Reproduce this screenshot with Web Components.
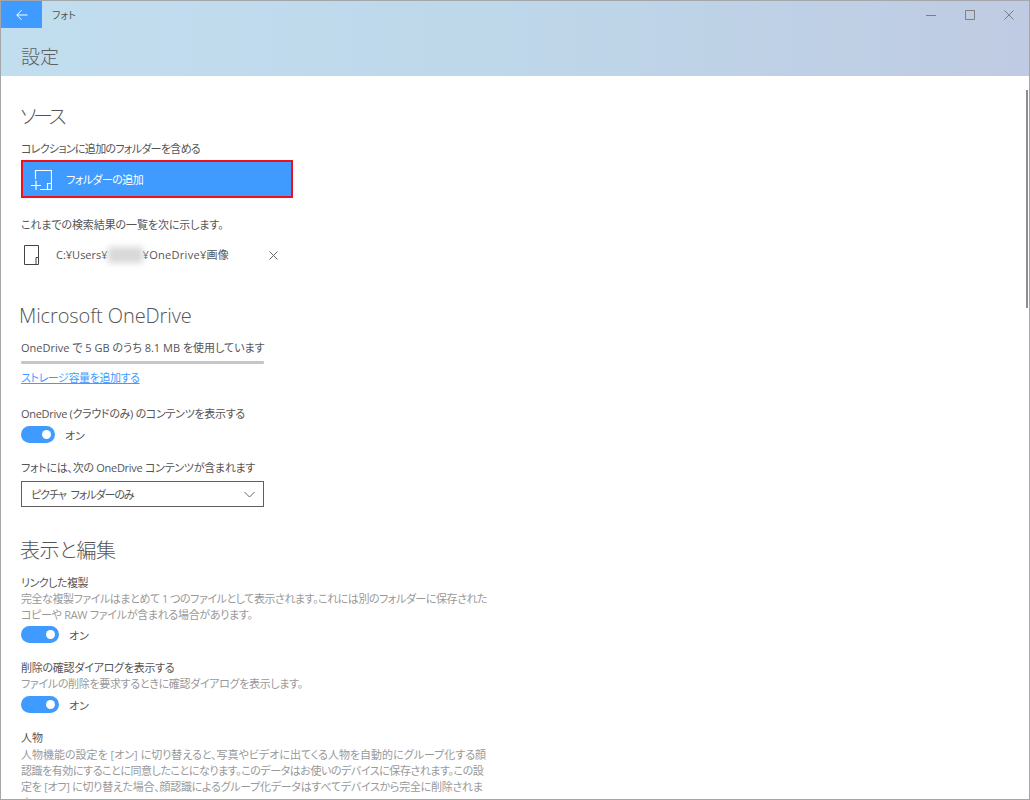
<!DOCTYPE html>
<html lang="ja">
<head>
<meta charset="utf-8">
<title>フォト</title>
<style>
    html, body { margin: 0; height: 100%; overflow: hidden; background: #fff; }
    body { font: 11px/16px "Open Sans", "Noto Sans CJK JP", sans-serif; color: #555; }
</style>
</head>
<body>
<photo-window>
    <title-bar slot="top" app="フォト" page="設定"></title-bar>

    <section-heading style="margin-top:26px;letter-spacing:-3.4px">ソース</section-heading>
    <field-label style="margin-top:10px;letter-spacing:-.7px">コレクションに追加のフォルダーを含める</field-label>
    <add-folder-button style="margin-top:4px;letter-spacing:-.55px">フォルダーの追加</add-folder-button>
    <field-label style="margin-top:18px;letter-spacing:-.1px">これまでの検索結果の一覧を次に示します。</field-label>
    <folder-row style="margin-top:12px"></folder-row>

    <section-heading style="margin-top:35px;margin-left:-2px;letter-spacing:-.1px">Microsoft OneDrive</section-heading>
    <field-label style="margin-top:10px">OneDrive で 5 GB のうち 8.1 MB を使用しています</field-label>
    <storage-meter style="margin-top:6px"></storage-meter>
    <link-text style="margin-top:5px;letter-spacing:-.4px">ストレージ容量を追加する</link-text>
    <field-label style="margin-top:20px;letter-spacing:-.3px">OneDrive (クラウドのみ) のコンテンツを表示する</field-label>
    <toggle-switch style="margin-top:5px" track="34">オン</toggle-switch>
    <field-label style="margin-top:16px;letter-spacing:-.28px">フォトには、次の OneDrive コンテンツが含まれます</field-label>
    <drop-down style="margin-top:6px;letter-spacing:-1.05px;word-spacing:3px">ピクチャ フォルダーのみ</drop-down>

    <section-heading style="margin-top:29px;letter-spacing:-.4px">表示と編集</section-heading>
    <field-label style="margin-top:10px;letter-spacing:-.5px">リンクした複製</field-label>
    <help-text style="letter-spacing:-.45px">完全な複製ファイルはまとめて 1 つのファイルとして表示されます。これには別のフォルダーに保存された<br><span style="letter-spacing:-.3px">コピーや RAW ファイルが含まれる場合があります。</span></help-text>
    <toggle-switch style="margin-top:4px" track="38">オン</toggle-switch>
    <field-label style="margin-top:16px;letter-spacing:-.25px">削除の確認ダイアログを表示する</field-label>
    <help-text style="letter-spacing:-.32px">ファイルの削除を要求するときに確認ダイアログを表示します。</help-text>
    <toggle-switch style="margin-top:5px" track="38">オン</toggle-switch>
    <field-label style="margin-top:16px">人物</field-label>
    <help-text style="margin-top:1px;letter-spacing:-.45px"><span style="letter-spacing:0">人物機能の設定を [オン] に切り替えると、写真やビデオに出てくる人物を自動的にグループ化する顔</span><br>認識を有効にすることに同意したことになります。このデータはお使いのデバイスに保存されます。この設<br><span style="letter-spacing:-.27px">定を [オフ] に切り替えた場合、顔認識によるグループ化データはすべてデバイスから完全に削除されま</span><br>す。</help-text>
</photo-window>

<script>
// text sits 1px lower in its line box than the browser puts it
const textStyle = `
    :host { display: block; font-feature-settings: "palt"; padding-top: 1px; margin-bottom: -1px; }
`;

class PhotoWindow extends HTMLElement {
    constructor() {
        super();
        this.attachShadow({mode: 'open'}).innerHTML = `
            <style>
                :host { display: flex; flex-direction: column; position: relative; box-sizing: border-box; width: 1030px; height: 800px; border: 1px solid #a3a7ab; overflow: hidden; background: #fff; }
                main { flex: 1; display: flex; flex-direction: column; align-items: flex-start; padding-left: 20px; overflow: hidden; min-height: 0; }
                ::slotted(*) { flex: none; }
                .thumb { position: absolute; right: 1px; top: 89px; width: 2px; height: 218px; background: #8e8e8e; }
            </style>
            <slot name="top"></slot>
            <main><slot></slot></main>
            <div class="thumb"></div>
        `;
    }
}

class TitleBar extends HTMLElement {
    constructor() {
        super();
        this.attachShadow({mode: 'open'}).innerHTML = `
            <style>
                :host { display: block; height: 75px; flex: none; background: linear-gradient(90deg, #c1deef 0%, #bed8ea 45%, #bfcbe2 100%); font-feature-settings: "palt"; }
                .top { display: flex; align-items: center; height: 27px; }
                .back { width: 41px; height: 27px; background: #3f9bff; display: flex; align-items: center; justify-content: center; }
                .app { margin-left: 10px; font-size: 10px; color: #555; flex: 1; }
                .ctl { width: 39px; height: 27px; display: flex; align-items: center; justify-content: center; }
                .ctl:last-child { width: 40px; }
                .page { padding: 15px 0 0 20px; font-size: 19px; line-height: 28px; color: #5b5f63; font-weight: 300; }
                svg { display: block; fill: none; }
            </style>
            <div class="top">
                <div class="back"><svg width="12" height="12" viewBox="0 0 12 12" stroke="#fff" stroke-width="1"><path d="M11.5 6H.8M5.5 1.2.8 6l4.7 4.8"/></svg></div>
                <div class="app"></div>
                <div class="ctl"><svg width="10" height="10" viewBox="0 0 10 10" stroke="#7f7f7f"><path d="M0 5.5h10"/></svg></div>
                <div class="ctl"><svg width="10" height="10" viewBox="0 0 10 10" stroke="#7f7f7f"><path d="M.5.5h9v9h-9z"/></svg></div>
                <div class="ctl"><svg width="10" height="10" viewBox="0 0 10 10" stroke="#7f7f7f"><path d="M.5.5l9 9M9.5.5l-9 9"/></svg></div>
            </div>
            <div class="page"></div>
        `;
        this.shadowRoot.querySelector('.app').textContent = this.getAttribute('app');
        this.shadowRoot.querySelector('.page').textContent = this.getAttribute('page');
    }
}

class SectionHeading extends HTMLElement {
    constructor() {
        super();
        this.attachShadow({mode: 'open'}).innerHTML = `
            <style>${textStyle}
                :host { font-size: 20px; line-height: 28px; color: #555; font-weight: 300; margin-left: -1px; }
            </style>
            <slot></slot>
        `;
    }
}

class FieldLabel extends HTMLElement {
    constructor() {
        super();
        this.attachShadow({mode: 'open'}).innerHTML = `
            <style>${textStyle}
                :host { color: #555; white-space: nowrap; }
            </style>
            <slot></slot>
        `;
    }
}

class HelpText extends HTMLElement {
    constructor() {
        super();
        this.attachShadow({mode: 'open'}).innerHTML = `
            <style>${textStyle}
                :host { color: #999; white-space: nowrap; }
            </style>
            <slot></slot>
        `;
    }
}

class LinkText extends HTMLElement {
    constructor() {
        super();
        this.attachShadow({mode: 'open'}).innerHTML = `
            <style>${textStyle}
                :host { color: #3f9bff; text-decoration: underline; }
            </style>
            <slot></slot>
        `;
    }
}

class AddFolderButton extends HTMLElement {
    constructor() {
        super();
        this.attachShadow({mode: 'open'}).innerHTML = `
            <style>
                :host { display: flex; align-items: center; box-sizing: border-box; width: 272px; height: 38px; background: #3f9bff; border: 2px solid #f0101c; color: #fff; font-feature-settings: "palt"; }
                svg { margin-left: 8px; flex: none; fill: none; stroke: #fff; stroke-width: 1.2; }
                span { margin-left: 14px; padding-top: 2px; }
            </style>
            <svg width="21" height="21" viewBox="0 0 21 21"><path d="M4.5 10V1.5h16v19H9M16.5 20.5v-6h4M0 16.5h10M5 11.5v10"/></svg>
            <span><slot></slot></span>
        `;
    }
}

class FolderRow extends HTMLElement {
    constructor() {
        super();
        this.attachShadow({mode: 'open'}).innerHTML = `
            <style>
                :host { display: flex; align-items: center; width: 257px; height: 22px; color: #555; white-space: nowrap; font-feature-settings: "palt"; }
                svg { flex: none; fill: none; }
                .path { margin-left: 17px; flex: 1; display: flex; align-items: center; }
                .name { display: inline-block; width: 35px; height: 16px; background: #d8d8d8; filter: blur(3px); }
                .rest { letter-spacing: .3px; }
            </style>
            <svg style="margin-left:3px" width="15" height="20" viewBox="0 0 15 20" stroke="#444"><path d="M.5.5h14v19H.5zM12 19.5v-7h2.5"/></svg>
            <div class="path"><span>C:¥Users¥</span><span class="name"></span><span class="rest">¥OneDrive¥画像</span></div>
            <svg width="9" height="9" viewBox="0 0 9 9" stroke="#666"><path d="M.5.5l8 8M8.5.5l-8 8"/></svg>
        `;
    }
}

class StorageMeter extends HTMLElement {
    constructor() {
        super();
        this.attachShadow({mode: 'open'}).innerHTML = `
            <style>
                :host { display: block; width: 243px; height: 3px; background: #c6c6c6; border-radius: 1px; }
            </style>
        `;
    }
}

class ToggleSwitch extends HTMLElement {
    constructor() {
        super();
        const track = this.getAttribute('track') || 38;
        this.attachShadow({mode: 'open'}).innerHTML = `
            <style>
                :host { display: flex; align-items: center; height: 17px; color: #555; font-feature-settings: "palt"; }
                .track { box-sizing: border-box; width: ${track}px; height: 17px; border-radius: 9px; background: #3f9bff; display: flex; align-items: center; justify-content: flex-end; padding-right: 4px; }
                .knob { width: 9px; height: 9px; border-radius: 50%; background: #fff; }
                span { margin-left: 10px; padding-top: 2px; }
            </style>
            <div class="track"><div class="knob"></div></div>
            <span><slot></slot></span>
        `;
    }
}

class DropDown extends HTMLElement {
    constructor() {
        super();
        this.attachShadow({mode: 'open'}).innerHTML = `
            <style>
                :host { display: flex; align-items: center; box-sizing: border-box; width: 243px; height: 26px; border: 1px solid #5f5f5f; color: #555; font-feature-settings: "palt"; }
                span { flex: 1; margin-left: 9px; padding-top: 2px; }
                svg { margin-right: 8px; fill: none; stroke: #666; }
            </style>
            <span><slot></slot></span>
            <svg width="11" height="7" viewBox="0 0 11 7"><path d="M.5 1l5 5 5-5"/></svg>
        `;
    }
}

customElements.define('photo-window', PhotoWindow);
customElements.define('title-bar', TitleBar);
customElements.define('section-heading', SectionHeading);
customElements.define('field-label', FieldLabel);
customElements.define('help-text', HelpText);
customElements.define('link-text', LinkText);
customElements.define('add-folder-button', AddFolderButton);
customElements.define('folder-row', FolderRow);
customElements.define('storage-meter', StorageMeter);
customElements.define('toggle-switch', ToggleSwitch);
customElements.define('drop-down', DropDown);
</script>
</body>
</html>
